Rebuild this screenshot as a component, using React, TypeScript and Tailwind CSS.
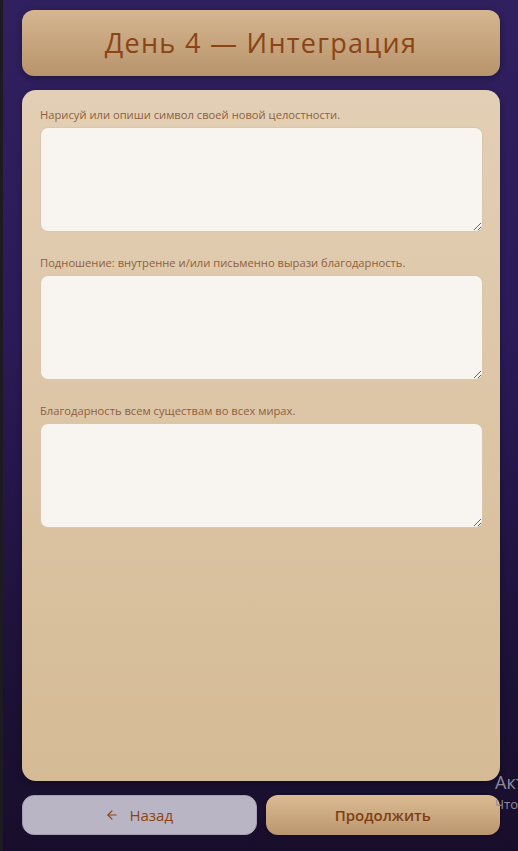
import React, { useState } from "react";
import { ArrowLeft } from "lucide-react";

const prompts = [
  "Нарисуй или опиши символ своей новой целостности.",
  "Подношение: внутренне и/или письменно вырази благодарность.",
  "Благодарность всем существам во всех мирах.",
];

export default function App() {
  const [values, setValues] = useState(["", "", ""]);

  return (
    <div
      className="relative h-[851px] w-[518px] overflow-hidden bg-[linear-gradient(180deg,#30205f_0%,#2a1a57_40%,#1c1136_80%,#180e2b_100%)] border-l-[3px] border-[#1d1a22]"
      style={{ fontFamily: '"Open Sans", "Noto Sans", sans-serif' }}
    >
      <div className="flex h-full flex-col pl-[19px] pr-[18px] pt-[10px] pb-[16px]">
        <div className="flex h-[66px] items-center justify-center rounded-[12px] bg-gradient-to-b from-[#d5b690] to-[#b8946c] shadow-[0_2px_6px_rgba(0,0,0,0.35)]">
          <h1 className="text-[27px] font-normal tracking-[1.3px] text-[#8a4416]">
            День 4 — Интеграция
          </h1>
        </div>

        <div className="mt-[14px] flex-1 rounded-[14px] bg-gradient-to-b from-[#e3cfb5] to-[#d5bb95] pl-[18px] pr-[17px] pt-[17px] shadow-[0_2px_6px_rgba(0,0,0,0.3)]">
          <div className="flex flex-col gap-[23px]">
            {prompts.map((p, i) => (
              <div key={i} className="flex flex-col gap-[5px]">
                <label className="text-[11.2px] leading-[15px] text-[#8f5f3c]">{p}</label>
                <textarea
                  value={values[i]}
                  onChange={(e) => {
                    const next = [...values];
                    next[i] = e.target.value;
                    setValues(next);
                  }}
                  className="block h-[105px] w-full rounded-[8px] border border-[#d9c6ad] bg-[#f8f4ef] p-2 text-sm text-[#5a3a20] focus:outline-none"
                />
              </div>
            ))}
          </div>
        </div>

        <div className="mt-[14px] grid grid-cols-2 gap-[9px]">
          <button className="flex h-[40px] items-center justify-center gap-[10px] rounded-[12px] border border-[#a59eb3] bg-[#bab5c5] text-[15px] text-[#8a4416]">
            <ArrowLeft className="h-[14px] w-[14px]" strokeWidth={2} />
            <span>Назад</span>
          </button>
          <button className="flex h-[40px] items-center justify-center rounded-[12px] bg-gradient-to-b from-[#dcbc94] to-[#ba966e] text-[15px] font-semibold text-[#7f3f14] shadow-[0_1px_3px_rgba(0,0,0,0.3)]">
            Продолжить
          </button>
        </div>
      </div>

      <div className="pointer-events-none absolute left-[492px] top-[771px] whitespace-nowrap text-[18px] leading-[22px] text-[#8f8a9c]">
        Активация Windows
      </div>
      <div className="pointer-events-none absolute left-[492px] top-[795px] whitespace-nowrap text-[13px] leading-[18px] text-[#8f8a9c]">
        Чтобы активировать Windows
      </div>
    </div>
  );
}
